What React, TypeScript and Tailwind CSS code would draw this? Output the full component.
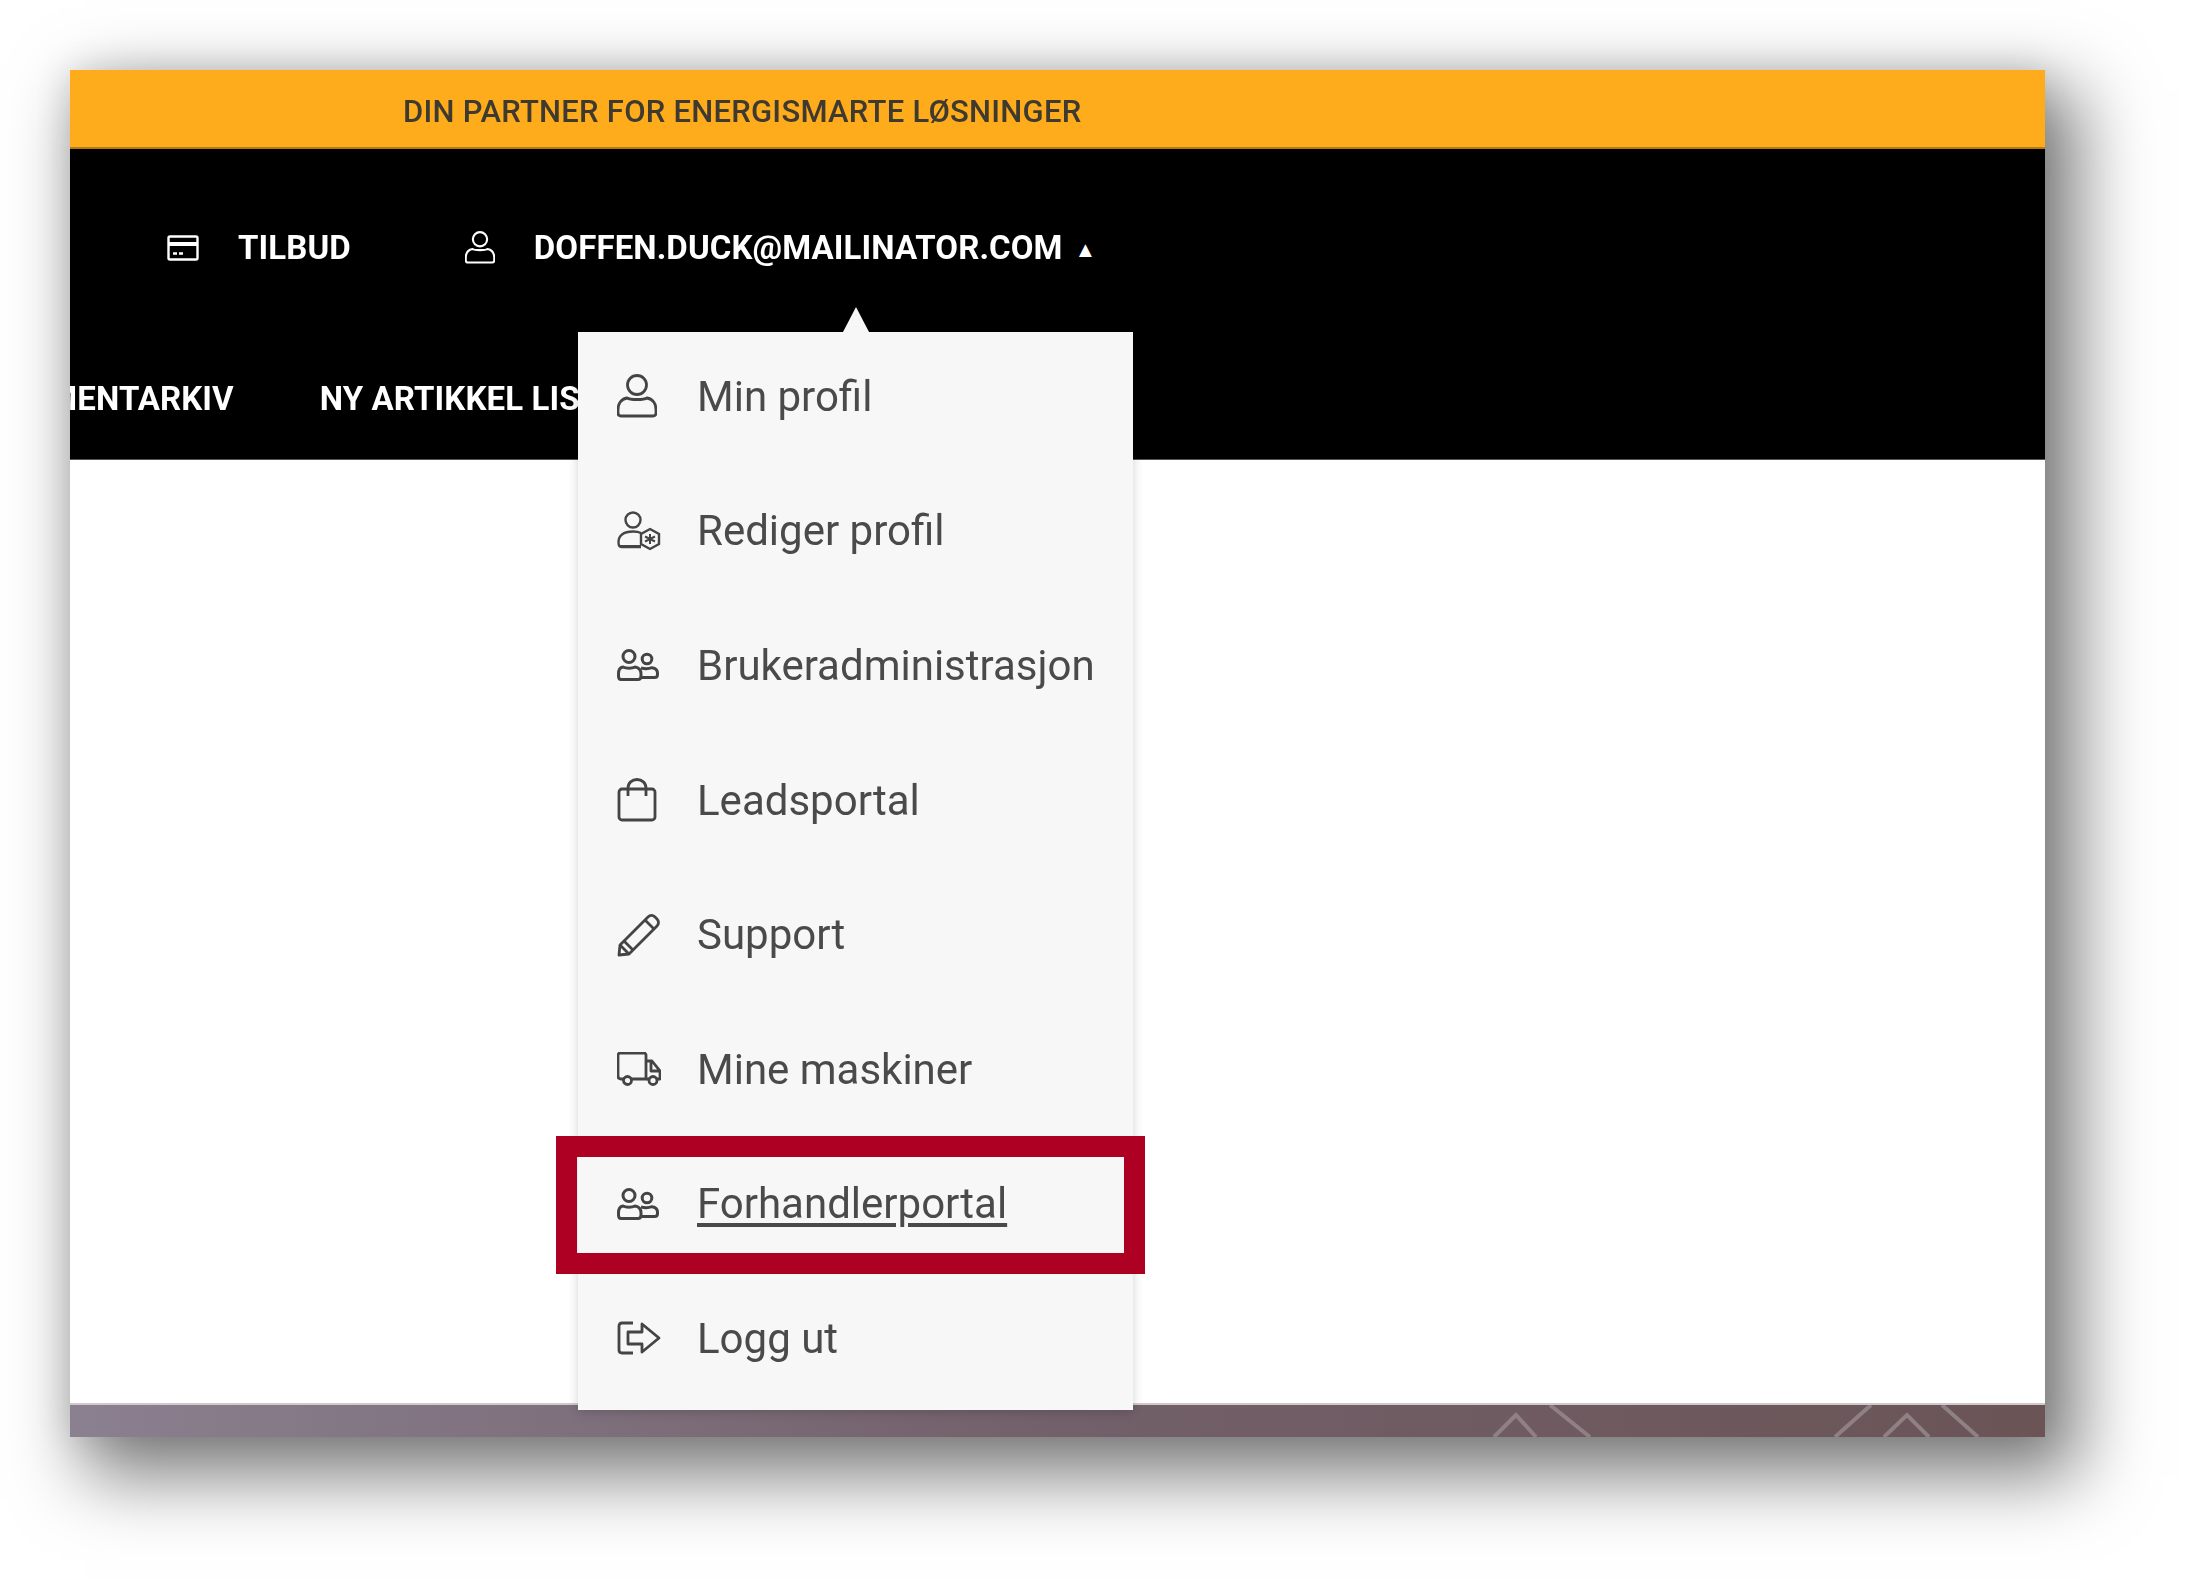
import React from "react";

const font = "font-['Roboto',sans-serif]";

function PersonIcon({ className }: { className?: string }) {
  return (
    <svg viewBox="0 0 40 44" fill="none" stroke="currentColor" strokeWidth="2.8" className={className}>
      <circle cx="20" cy="11" r="9.5" />
      <path d="M10 24c3 2 17 2 20 0 6 1 9 6 9 12v3c0 2-1 3-3 3H4c-2 0-3-1-3-3v-3c0-6 3-11 9-12z" />
    </svg>
  );
}

function PersonGearIcon() {
  return (
    <svg viewBox="0 0 44 40" fill="none" stroke="currentColor" strokeWidth="2.4" className="h-[40px] w-[44px]">
      <circle cx="16" cy="9" r="7.5" />
      <path d="M24 22c-2-1-4-1.500-8-1.500C6 20.500 1.500 25 1.500 31c0 3 1 5 3 5H24" />
      <path d="M3 35.500h21" strokeWidth="3" />
      <path d="M33 18l9 5v10l-9 5-9-5V23z" />
      <path d="M33 23v10M28 25.500l10 5M38 25.500l-10 5" strokeWidth="2" />
    </svg>
  );
}

function PeopleIcon() {
  return (
    <svg viewBox="0 0 42 32" fill="none" stroke="currentColor" strokeWidth="3" className="h-[32px] w-[42px]">
      <circle cx="12" cy="7.500" r="6" />
      <circle cx="30" cy="10" r="4.800" />
      <path d="M6 18c3 1.500 9 1.500 12 0 3.500.5 6 3 6 7v2c0 2-1 3.500-3 3.500H4C2 30.500 1.500 29 1.500 27v-2c0-4 1-6.500 4.500-7z" />
      <path d="M24 19c3 .8 8 .8 11-.3 3 .5 5.500 2.500 5.500 5.300v1.500c0 2-1 3-3 3H24" />
    </svg>
  );
}

function BagIcon() {
  return (
    <svg viewBox="0 0 40 44" fill="none" stroke="currentColor" strokeWidth="2.8" className="h-[44px] w-[40px]">
      <rect x="2" y="11" width="36" height="31" rx="3" />
      <path d="M11 18V10c0-5 4-8.500 9-8.500S29 5 29 10v8" />
    </svg>
  );
}

function PencilIcon() {
  return (
    <svg viewBox="0 0 44 44" fill="none" stroke="currentColor" strokeWidth="2.8" strokeLinejoin="round" className="h-[44px] w-[44px]">
      <path d="M2 42l1-10L31 4c2-2 5-2 7 0l2 2c2 2 2 5 0 7L12 41z" />
      <path d="M28 7l9 9M3 32l9 9M7 28l9 9" />
    </svg>
  );
}

function TruckIcon() {
  return (
    <svg viewBox="0 0 44 34" fill="none" stroke="currentColor" strokeWidth="2.8" strokeLinejoin="round" className="h-[34px] w-[44px]">
      <path d="M7 27H4c-2 0-3-1-3-3V3c0-1 1-2 2-2h24c1 0 2 1 2 2v24H14" />
      <path d="M29 9h6l8 10v8h-3M29 27h3M34 10v9h9" />
      <circle cx="10.500" cy="28.500" r="4" />
      <circle cx="36" cy="28.500" r="4" />
    </svg>
  );
}

function LogoutIcon() {
  return (
    <svg viewBox="0 0 44 34" fill="none" stroke="currentColor" strokeWidth="2.8" strokeLinejoin="round" className="h-[34px] w-[44px]">
      <path d="M16 2H5C3 2 2 3 2 5v24c0 2 1 3 3 3h11" />
      <path d="M11 11h14V3l17 14-17 14v-8H11z" />
    </svg>
  );
}

function CardIcon() {
  return (
    <svg viewBox="0 0 32 26" fill="none" stroke="currentColor" strokeWidth="2.4" className="h-[26px] w-[32px]">
      <rect x="1.500" y="1.500" width="29" height="23" rx="1.500" />
      <path d="M1.500 9h29" strokeWidth="4" />
      <path d="M6 18.500h4M12 18.500h4" />
    </svg>
  );
}

const items = [
  { label: "Min profil", icon: <PersonIcon className="h-[44px] w-[40px]" /> },
  { label: "Rediger profil", icon: <PersonGearIcon /> },
  { label: "Brukeradministrasjon", icon: <PeopleIcon /> },
  { label: "Leadsportal", icon: <BagIcon /> },
  { label: "Support", icon: <PencilIcon /> },
  { label: "Mine maskiner", icon: <TruckIcon /> },
  { label: "Forhandlerportal", icon: <PeopleIcon />, active: true },
  { label: "Logg ut", icon: <LogoutIcon /> },
];

export default function App() {
  return (
    <div className={`h-[1579px] w-[2187px] overflow-hidden bg-white pl-[70px] pt-[70px] ${font}`}>
      <div className="relative flex h-[1367px] w-[1975px] flex-col shadow-[24px_30px_68px_10px_rgba(0,0,0,0.5),0_0_34px_rgba(0,0,0,0.12)]">
        <div className="flex h-[79px] items-center border-b-2 border-[#b87a12] bg-[#ffac1c] pl-[333px] pt-[7px] text-[31px] font-medium tracking-[0.25px] text-[#3f3a30]">
          <span className="blur-[0.4px]">DIN PARTNER FOR ENERGISMARTE LØSNINGER</span>
        </div>

        <div className="h-[311px] overflow-hidden border-b border-[#555] bg-black text-[33px] font-bold tracking-[0.1px] text-white">
          <div className="flex h-[197px] items-center pl-[97px]">
            <CardIcon />
            <span className="ml-[39px] blur-[0.3px]">TILBUD</span>
            <PersonIcon className="ml-[114px] h-[33px] w-[30px]" />
            <span className="ml-[39px] blur-[0.3px]">DOFFEN.DUCK@MAILINATOR.COM</span>
            <span className="ml-[12px] mt-[4px] text-[22px]">▲</span>
          </div>
          <div className="flex h-[106px] items-center whitespace-nowrap blur-[0.3px]">
            <span className="ml-[-109px]">DOKUMENTARKIV</span>
            <span className="ml-[86px]">NY ARTIKKEL LISTE</span>
          </div>
        </div>

        <div className="flex-1 bg-white" />

        <div className="relative h-[34px] overflow-hidden border-t-2 border-[#cfc9cb] bg-gradient-to-r from-[#8b8090] via-[#72606a] to-[#6a5456]">
          <svg viewBox="0 0 1975 32" className="absolute left-0 top-0 h-full w-full" fill="none" stroke="#8f8083" strokeWidth="4">
            <path d="M1424 32l22-22 20 22M1480 0l40 32M1765 32l36-32M1814 32l23-22 22 22M1872 0l36 32" />
          </svg>
        </div>

        {/* dropdown */}
        <div className="absolute left-[508px] top-[262px] w-[555px] bg-[#f7f7f7] pb-[1px] shadow-[0_2px_10px_rgba(0,0,0,0.18)]">
          <div className="absolute left-[265px] top-[-25px] h-0 w-0 border-x-[13px] border-b-[25px] border-x-transparent border-b-[#f7f7f7]" />
          {items.map((item) => (
            <div key={item.label} className="flex h-[134.6px] items-center pb-[6px] pl-[39px] text-[42px] text-[#4a4a4a]">
              <div className="flex w-[80px] justify-start text-[#444] blur-[0.4px]">{item.icon}</div>
              <span className={`blur-[0.4px] ${item.active ? "underline underline-offset-[5px]" : ""}`}>{item.label}</span>
            </div>
          ))}
        </div>

        {/* red highlight around Forhandlerportal */}
        <div className="absolute left-[486px] top-[1066px] h-[138px] w-[589px] border-[21px] border-[#ae0022]" />
      </div>
    </div>
  );
}
